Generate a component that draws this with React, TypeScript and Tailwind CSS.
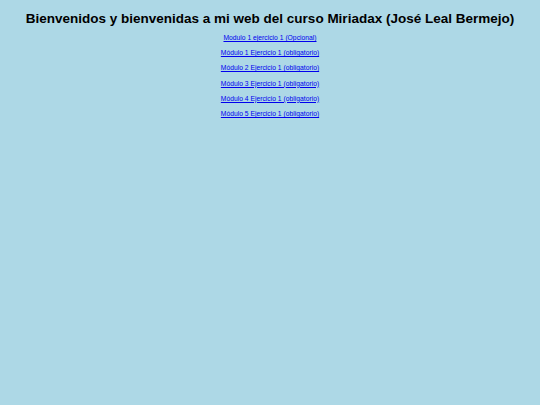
export default function App() {
  const links = [
    "Modulo 1 ejercicio 1 (Opcional)",
    "Módulo 1 Ejercicio 1 (obligatorio)",
    "Módulo 2 Ejercicio 1 (obligatorio)",
    "Módulo 3 Ejercicio 1 (obligatorio)",
    "Módulo 4 Ejercicio 1 (obligatorio)",
    "Módulo 5 Ejercicio 1 (obligatorio)",
  ];
  return (
    <div className="w-[540px] h-[405px] bg-[#add8e6] text-center" style={{ fontFamily: '"Liberation Sans", Arial, sans-serif' }}>
      <h1 className="pt-[11px] text-[13.5px] font-bold text-black leading-[16px] whitespace-nowrap">
        Bienvenidos y bienvenidas a mi web del curso Miriadax (José Leal Bermejo)
      </h1>
      <div className="flex flex-col items-center pt-[7px] gap-[7.2px]">
        {links.map((l) => (
          <a key={l} href="#" className="text-[6.75px] leading-[8px] text-[#0000ee] underline">
            {l}
          </a>
        ))}
      </div>
    </div>
  );
}
